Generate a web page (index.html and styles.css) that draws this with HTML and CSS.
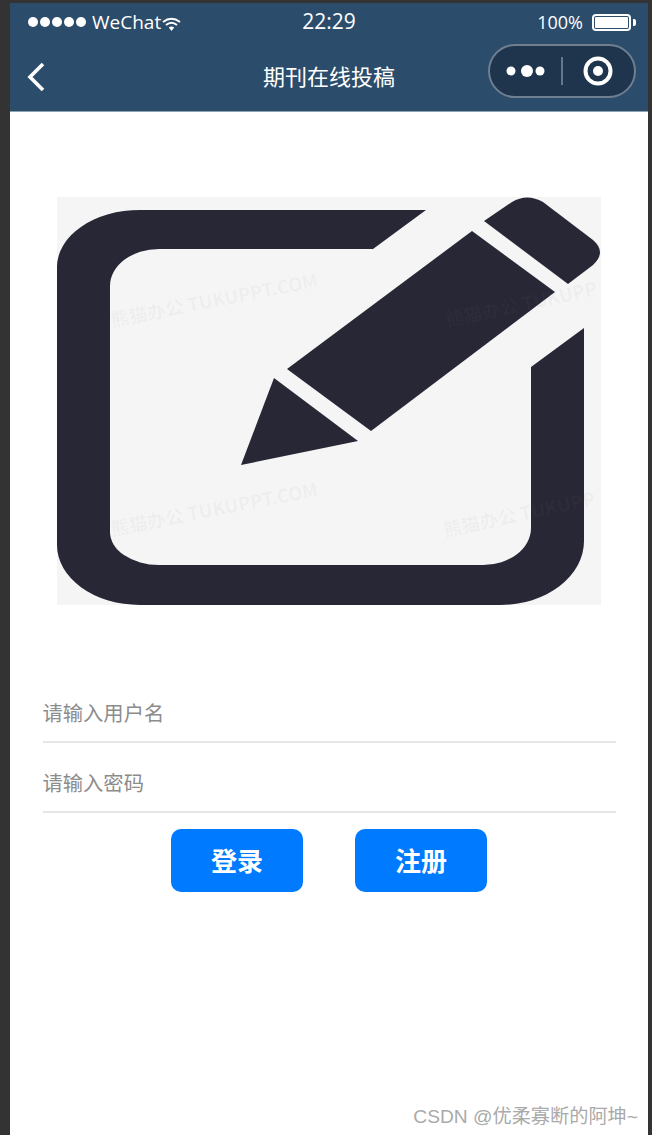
FILE: index.html
```html
<!DOCTYPE html>
<html lang="en">
<head>
    <meta charset="UTF-8">
    <meta name="viewport" content="width=device-width, initial-scale=1.0">
    <title>期刊在线投稿</title>
    <link rel="stylesheet" href="styles.css">
</head>
<body>
    <div class="phone">
        <div class="header">
            <div class="status-bar">
                <div class="status-left">
                    <span class="signal"><i></i><i></i><i></i><i></i><i></i></span>
                    <span class="carrier">WeChat</span>
                    <svg class="wifi" viewBox="0 0 19 14" width="19" height="14">
                        <path d="M1 5 Q9.5 -1.5 18 5" fill="none" stroke="#fff" stroke-width="2"/>
                        <path d="M4 8 Q9.5 3.5 15 8" fill="none" stroke="#fff" stroke-width="2"/>
                        <path d="M6.8 10.6 Q9.5 8.6 12.2 10.6 L9.5 14 Z" fill="#fff"/>
                    </svg>
                </div>
                <div class="status-time">22:29</div>
                <div class="status-right">
                    <span class="percent">100%</span>
                    <span class="battery"><span class="battery-level"></span></span>
                    <span class="battery-nub"></span>
                </div>
            </div>
            <div class="nav-bar">
                <div class="nav-left">
                    <svg class="back" viewBox="0 0 18 30" width="18" height="30">
                        <path d="M16 2 L3 15 L16 28" fill="none" stroke="#fff" stroke-width="3.6"/>
                    </svg>
                </div>
                <div class="nav-title">期刊在线投稿</div>
                <div class="nav-right">
                    <div class="capsule">
                        <svg viewBox="0 0 148 54" width="148" height="54">
                            <circle cx="23" cy="27" r="4.5" fill="#fff"/>
                            <circle cx="39" cy="27" r="6" fill="#fff"/>
                            <circle cx="52" cy="27" r="4.5" fill="#fff"/>
                            <line x1="74" y1="13" x2="74" y2="41" stroke="#65778a" stroke-width="2"/>
                            <circle cx="110" cy="27" r="12.5" fill="none" stroke="#fff" stroke-width="4"/>
                            <circle cx="110" cy="27" r="5" fill="#fff"/>
                        </svg>
                    </div>
                </div>
            </div>
        </div>

        <div class="content">
            <svg class="logo" viewBox="0 0 544 408" width="544" height="408">
                <rect width="544" height="408" fill="#f5f5f5"/>
                <path class="ink" fill-rule="evenodd" d="M369 13 L316 52 L102 52 A49 37 0 0 0 53 89 L53 335 A49 33 0 0 0 102 368 L426 368 A48 37 0 0 0 474 331 L474 170 L527 131 L527 344 A84 64 0 0 1 443 408 L83 408 A83 60 0 0 1 0 348 L0 70 A83 57 0 0 1 83 13 Z"/>
                <polygon class="ink" points="415,34 498,95 314,234 230,172"/>
                <polygon class="ink" points="217,181 184,268 301,244"/>
                <path class="ink" d="M427 24 L455 5 Q470 -4 486 5 L536 43 Q550 55 536 68 L511 87 Z"/>
                <text class="mark" transform="translate(55 130) rotate(-11)">熊猫办公 TUKUPPT.COM</text>
                <text class="mark" transform="translate(55 339) rotate(-11)">熊猫办公 TUKUPPT.COM</text>
                <text class="mark" transform="translate(390 130) rotate(-12)">熊猫办公 TUKUPP</text>
                <text class="mark" transform="translate(388 340) rotate(-12)">熊猫办公 TUKUPP</text>
            </svg>

            <div class="form">
                <input class="field" type="text" placeholder="请输入用户名">
                <input class="field" type="password" placeholder="请输入密码">
                <div class="actions">
                    <button class="btn">登录</button>
                    <button class="btn">注册</button>
                </div>
            </div>
        </div>
    </div>
    <div class="credit">CSDN @优柔寡断的阿坤~</div>
</body>
</html>
```

FILE: styles.css
```css
html, body {
    height: 100%;
}
body {
    margin: 0;
    padding: 3px 4px 0 10px;
    box-sizing: border-box;
    overflow: hidden;
    background-color: #333;
    font-family: "Open Sans", "Noto Sans CJK SC", sans-serif;
}
.phone {
    height: 100%;
    display: flex;
    flex-direction: column;
    background-color: #fff;
}
.header {
    height: 109px;
    background-color: #2b4c6b;
    color: #fff;
    border-bottom: 1px solid #8fa3b5;
    box-sizing: border-box;
}

/* status bar */
.status-bar {
    height: 38px;
    display: grid;
    grid-template-columns: 1fr auto 1fr;
    align-items: center;
    padding: 0 12px;
}
.status-left, .status-right {
    display: flex;
    align-items: center;
}
.status-right {
    justify-content: flex-end;
}
.signal {
    display: flex;
    gap: 2px;
    margin: 0 6px;
}
.signal i {
    width: 10px;
    height: 10px;
    border-radius: 50%;
    background-color: #fff;
}
.carrier {
    font-size: 19px;
    line-height: 24px;
}
.wifi {
    margin: 4px 0 0 1px;
}
.status-time {
    font-size: 21px;
    line-height: 26px;
    margin-top: -2px;
}
.percent {
    font-size: 18px;
    margin-right: 9px;
}
.battery {
    width: 39px;
    height: 17px;
    margin-top: 1px;
    padding: 2px;
    box-sizing: border-box;
    border: 2px solid #fff;
    border-radius: 4px;
    display: flex;
}
.battery-level {
    flex: 1;
    background-color: #fff;
    border-radius: 1px;
    margin: -1px;
}
.battery-nub {
    width: 3px;
    height: 7px;
    margin: 1px 0 0 2px;
    background-color: #fff;
    border-radius: 0 2px 2px 0;
}

/* nav bar */
.nav-bar {
    height: 70px;
    display: grid;
    grid-template-columns: 1fr auto 1fr;
    align-items: center;
    padding: 0 12px;
}
.back {
    display: block;
    margin: 2px 0 0 5px;
}
.nav-title {
    font-family: "Noto Sans CJK SC", sans-serif;
    font-size: 22px;
    margin-top: -3px;
}
.nav-right {
    display: flex;
    justify-content: flex-end;
}
.capsule {
    width: 148px;
    height: 54px;
    margin-bottom: 10px;
    border-radius: 27px;
    box-sizing: border-box;
    border: 2px solid #6f7f90;
    background-color: #1f354d;
    overflow: hidden;
}
.capsule svg {
    display: block;
    margin: -2px;
}

/* logo */
.content {
    flex: 1;
    display: flex;
    flex-direction: column;
    align-items: center;
    padding-top: 85px;
}
.logo {
    display: block;
}
.ink {
    fill: #282736;
}
.mark {
    font-family: "Noto Sans CJK SC", sans-serif;
    font-size: 18.5px;
    font-weight: 700;
    fill: #808080;
    fill-opacity: 0.06;
}

/* form */
.form {
    width: 573px;
    margin-top: 68px;
    display: flex;
    flex-direction: column;
}
.field {
    height: 70px;
    padding: 9px 0 0;
    border: none;
    border-bottom: 2px solid #e6e6e6;
    box-sizing: border-box;
    outline: none;
    font-family: "Noto Sans CJK SC", sans-serif;
    font-size: 20.3px;
    background: transparent;
}
.field::placeholder {
    color: #8c8c8c;
    opacity: 1;
}
.actions {
    display: flex;
    justify-content: center;
    gap: 52px;
    margin-top: 16px;
}
.btn {
    width: 132px;
    height: 63px;
    padding: 0 0 2px;
    border: none;
    border-radius: 10px;
    background-color: #007aff;
    color: #fff;
    font-family: "Noto Sans CJK SC", sans-serif;
    font-size: 26px;
    font-weight: 700;
}

/* site watermark over the page */
.credit {
    position: absolute;
    right: 14px;
    bottom: 6px;
    font-family: "Liberation Sans", "Noto Sans CJK SC", sans-serif;
    font-size: 19.2px;
    color: #aaa;
}
```
